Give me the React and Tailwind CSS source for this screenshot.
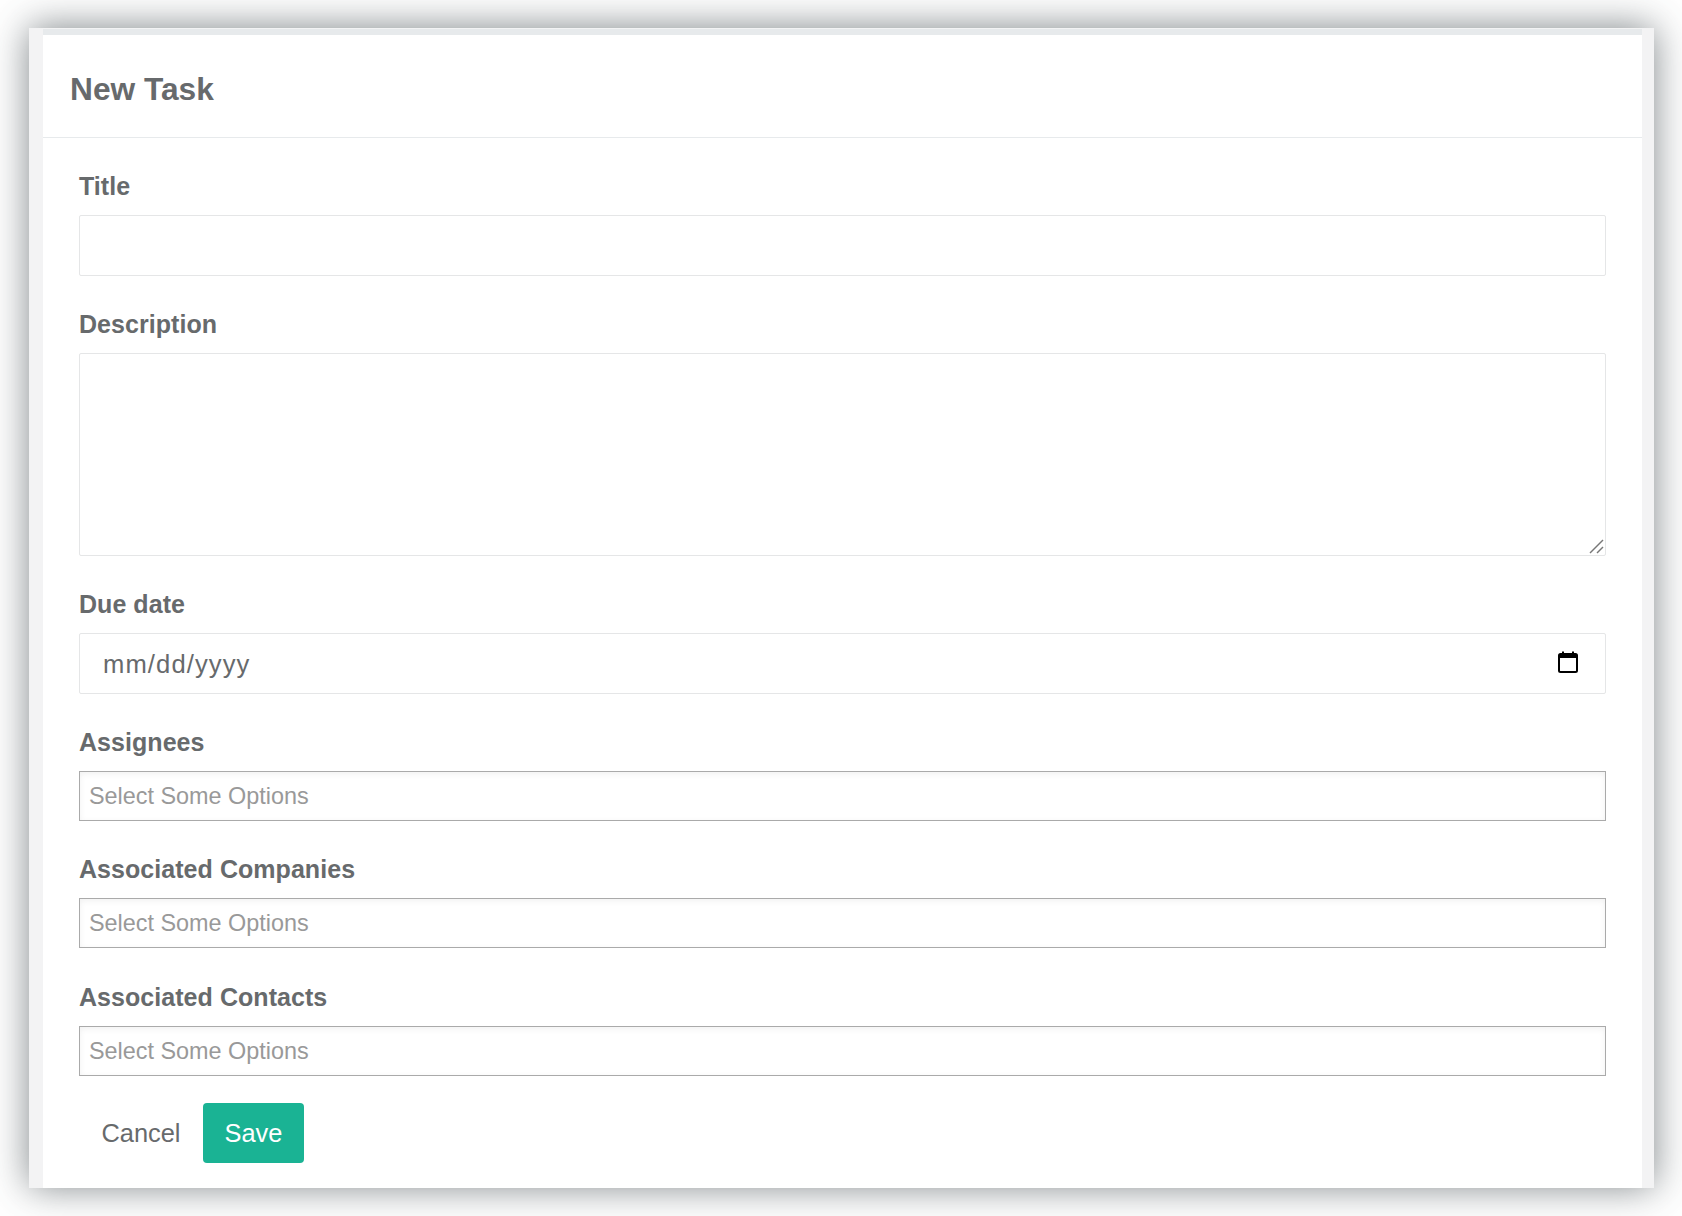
function Label({ children }) {
  return (
    <label className="block h-[36px] mb-[11px] text-[25px] tracking-[0.05px] leading-[36px] font-bold text-[#676a6c]">
      {children}
    </label>
  );
}

function ChosenSelect({ label, className = "" }) {
  return (
    <div className={className}>
      <Label>{label}</Label>
      <div className="h-[50px] border border-[#aaaaaa] bg-white shadow-[inset_0_2px_6px_rgba(0,0,0,0.06)] pl-[9px] text-[23.4px] leading-[49px] text-[#999999]">
        Select Some Options
      </div>
    </div>
  );
}

export default function App() {
  return (
    <div className="h-[1216px] bg-white pt-[28px] pl-[29px] pr-[28px] overflow-hidden font-['Liberation_Sans',Arial,sans-serif]">
      <div className="h-[1160px] bg-[#f3f3f4] pt-[1px] pl-[14px] pr-[12px] shadow-[0_-1px_36px_rgba(50,60,65,0.62)]">
        <div className="h-full bg-white border-t-[6px] border-[#e7eaec]">
          <header className="h-[103px] border-b border-[#e7eaec] pl-[27px] flex items-center">
            <h1 className="text-[31.7px] font-bold text-[#676a6c] leading-none mt-[8px]">New Task</h1>
          </header>
          <form className="pt-[30px] pl-[36px] pr-[36px]">
            <div className="mb-[30px]">
              <Label>Title</Label>
              <input type="text" className="block w-full h-[61px] border border-[#e5e6e7] rounded-[2px] bg-white outline-none" />
            </div>
            <div className="mb-[30px]">
              <Label>Description</Label>
              <div className="relative">
                <textarea className="block w-full h-[203px] border border-[#e5e6e7] rounded-[2px] bg-white outline-none resize-none" />
                <svg className="absolute right-[2px] bottom-[2px]" width="15" height="15" viewBox="0 0 15 15" fill="none" stroke="#777777" strokeWidth="1.4">
                  <path d="M1 14 L14 1" />
                  <path d="M8 14 L14 8" />
                </svg>
              </div>
            </div>
            <div className="mb-[30px]">
              <Label>Due date</Label>
              <div className="flex items-center justify-between h-[61px] border border-[#e5e6e7] rounded-[2px] bg-white pl-[23px] pr-[27px]">
                <span className="mt-[2px] text-[25.6px] tracking-[1.1px] text-[#676a6c]">mm/dd/yyyy</span>
                <svg className="mb-[3px]" width="20" height="22" viewBox="0 0 20 22" fill="none">
                  <rect x="1" y="3" width="18" height="18" rx="1.5" stroke="#000000" strokeWidth="2" />
                  <rect x="1" y="3" width="18" height="4" fill="#000000" />
                  <rect x="4" y="0.5" width="2" height="3" fill="#000000" />
                  <rect x="14" y="0.5" width="2" height="3" fill="#000000" />
                </svg>
              </div>
            </div>
            <ChosenSelect label="Assignees" className="mb-[30px]" />
            <ChosenSelect label="Associated Companies" className="mb-[31px]" />
            <ChosenSelect label="Associated Contacts" className="mb-[27px]" />
            <div className="flex items-center">
              <button type="button" className="w-[124px] h-[60px] text-[25.4px] text-[#676a6c] bg-transparent">Cancel</button>
              <button type="button" className="w-[101px] h-[60px] rounded-[4px] bg-[#1ab394] text-[25.4px] text-white">Save</button>
            </div>
          </form>
        </div>
      </div>
    </div>
  );
}
